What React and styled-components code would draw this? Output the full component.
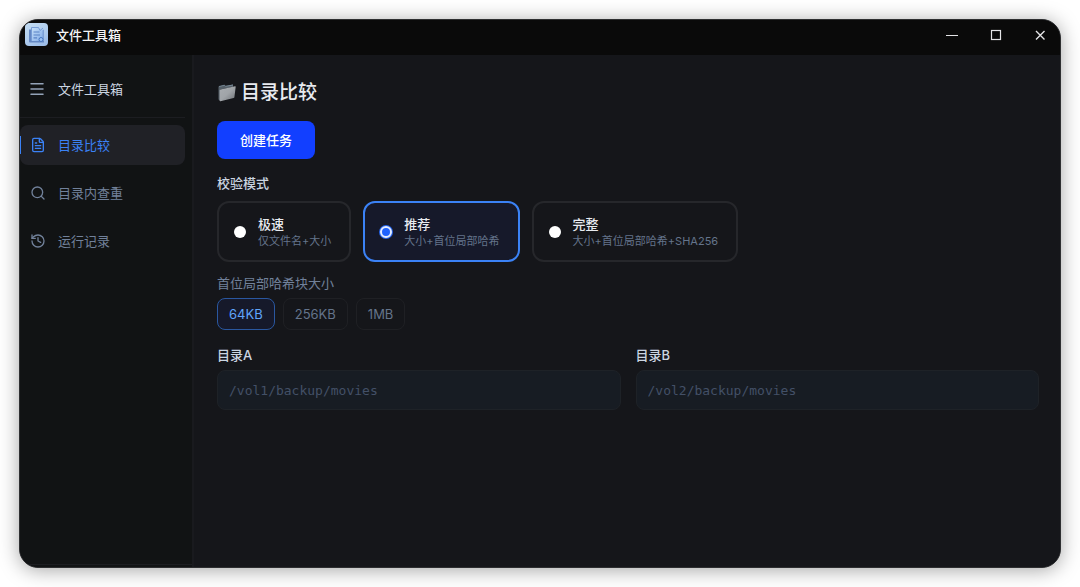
import React, { useState } from "react"
import styled, { createGlobalStyle, css } from "styled-components"
import { FileText, History, Menu, Search } from "lucide-react"

const NAV = [
    { id: "compare", label: "目录比较", icon: FileText },
    { id: "dupes", label: "目录内查重", icon: Search },
    { id: "history", label: "运行记录", icon: History },
]

const MODES = [
    { id: "fast", title: "极速", desc: "仅文件名+大小" },
    { id: "recommended", title: "推荐", desc: "大小+首位局部哈希" },
    { id: "full", title: "完整", desc: "大小+首位局部哈希+SHA256" },
]

const BLOCK_SIZES = ["64KB", "256KB", "1MB"]

export default function App() {
    const [page, setPage] = useState("compare")
    const [mode, setMode] = useState("recommended")
    const [blockSize, setBlockSize] = useState("64KB")

    return (
        <>
            <GlobalStyle />
            <Desktop>
                <Window>
                    <TitleBar>
                        <AppIcon />
                        <WindowTitle>文件工具箱</WindowTitle>
                        <WindowButtons />
                    </TitleBar>
                    <Body>
                        <Sidebar>
                            <SidebarHeader>
                                <MenuButton aria-label="菜单">
                                    <Menu size={18} strokeWidth={2} />
                                </MenuButton>
                                文件工具箱
                            </SidebarHeader>
                            <Nav>
                                {NAV.map(({ id, label, icon: Icon }) => (
                                    <NavItem key={id} type="button" $active={page === id} onClick={() => setPage(id)}>
                                        <Icon size={16} strokeWidth={2} />
                                        {label}
                                    </NavItem>
                                ))}
                            </Nav>
                            <SidebarFooter />
                        </Sidebar>
                        <Main>
                            <Heading>
                                <FolderIcon />
                                目录比较
                            </Heading>
                            <PrimaryButton type="button">创建任务</PrimaryButton>

                            <Group>
                                <Legend>校验模式</Legend>
                                <ModeRow>
                                    {MODES.map(m => (
                                        <ModeCard key={m.id} $checked={mode === m.id}>
                                            <Radio
                                                type="radio"
                                                name="mode"
                                                checked={mode === m.id}
                                                onChange={() => setMode(m.id)}
                                            />
                                            <ModeText>
                                                <ModeTitle>{m.title}</ModeTitle>
                                                <ModeDesc>{m.desc}</ModeDesc>
                                            </ModeText>
                                        </ModeCard>
                                    ))}
                                </ModeRow>
                            </Group>

                            <BlockLabel>首位局部哈希块大小</BlockLabel>
                            <ChipRow>
                                {BLOCK_SIZES.map(size => (
                                    <Chip
                                        key={size}
                                        type="button"
                                        $active={blockSize === size}
                                        onClick={() => setBlockSize(size)}
                                    >
                                        {size}
                                    </Chip>
                                ))}
                            </ChipRow>

                            <Fields>
                                <Field>
                                    <FieldLabel htmlFor="dir-a">目录A</FieldLabel>
                                    <PathInput id="dir-a" placeholder="/vol1/backup/movies" />
                                </Field>
                                <Field>
                                    <FieldLabel htmlFor="dir-b">目录B</FieldLabel>
                                    <PathInput id="dir-b" placeholder="/vol2/backup/movies" />
                                </Field>
                            </Fields>
                        </Main>
                    </Body>
                </Window>
            </Desktop>
        </>
    )
}

function WindowButtons() {
    return (
        <Controls>
            <ControlButton aria-label="最小化">
                <svg width="14" height="14" viewBox="0 0 14 14" fill="none" stroke="currentColor">
                    <path d="M1 7.5h12" strokeWidth="1.2" />
                </svg>
            </ControlButton>
            <ControlButton aria-label="最大化">
                <svg width="14" height="14" viewBox="0 0 14 14" fill="none" stroke="currentColor">
                    <rect x="2.5" y="2.5" width="9" height="9" strokeWidth="1.2" />
                </svg>
            </ControlButton>
            <ControlButton aria-label="关闭">
                <svg width="14" height="14" viewBox="0 0 14 14" fill="none" stroke="currentColor">
                    <path d="M3 3l8.500 8.500M11.500 3L3 11.500" strokeWidth="1.4" />
                </svg>
            </ControlButton>
        </Controls>
    )
}

function AppIcon() {
    return (
        <svg width="23" height="23" viewBox="0 0 23 23" fill="none">
            <defs>
                <linearGradient id="tile" x1="0" y1="0" x2="0.6" y2="1">
                    <stop offset="0" stopColor="#c3dcf2" />
                    <stop offset="0.6" stopColor="#b0cdee" />
                    <stop offset="1" stopColor="#9dbde8" />
                </linearGradient>
                <linearGradient id="sheet" x1="0" y1="0" x2="1" y2="1">
                    <stop offset="0" stopColor="#c6e0f8" />
                    <stop offset="1" stopColor="#82ace8" />
                </linearGradient>
            </defs>
            <rect width="23" height="23" rx="4" fill="url(#tile)" />
            <path d="M4 6.500h2V18h13v1.500H5q-1 0-1-1z" fill="#6488c4" />
            <path d="M16 8l3-1.500V18h-3z" fill="#7b9fd6" />
            <path d="M6.500 4.500h7L15 7l2.500-1v12h-11z" fill="url(#sheet)" />
            <path d="M6.500 18V4.500h7l1.500 3 3-2.500" stroke="#6f96d2" strokeWidth="0.9" />
            <path d="M8.500 9h6M8.500 12h6.500M8.500 14.800h3.500" stroke="#5b84c6" strokeWidth="1.2" />
            <circle cx="16" cy="16.500" r="2" fill="#9cc3f4" stroke="#4675be" />
        </svg>
    )
}

function FolderIcon() {
    return (
        <svg width="20" height="20" viewBox="0 0 20 20" fill="none">
            <defs>
                <linearGradient id="folder" x1="0" y1="0" x2="1" y2="1">
                    <stop offset="0" stopColor="#a9adb1" />
                    <stop offset="0.5" stopColor="#a0a4a8" />
                    <stop offset="1" stopColor="#6d7176" />
                </linearGradient>
            </defs>
            <path d="M1.500 3.500l6-1.500 1 1 7.500-1.500V4L3 6.500v11l-1.500-1z" fill="#555f68" />
            <path d="M2 3.500l5.500-1.300 1 1.100L16 2" stroke="#7f929f" strokeWidth="0.8" />
            <path d="M3.500 6.400L18 3.200q.8-.1.700.6l-1.300 10.400q-.1.700-.8.900L3.500 18.200q-.9.200-.9-.7V7.300q0-.8.900-.9z" fill="url(#folder)" />
        </svg>
    )
}

const GlobalStyle = createGlobalStyle`
  * {
    box-sizing: border-box;
  }
  body {
    margin: 0;
    background: #ffffff;
    font-family: Inter, "Noto Sans CJK SC", sans-serif;
    font-size: 13px;
    line-height: 20px;
  }
  button, input {
    font: inherit;
    margin: 0;
  }
`
const Desktop = styled.div`
  display: flex;
  min-height: 100vh;
  padding: 19px;
`
const Window = styled.div`
  display: flex;
  flex-direction: column;
  flex: 1;
  min-width: 0;
  overflow: hidden;
  border: 1px solid #2e2f31;
  border-radius: 19px;
  background: #15161a;
  box-shadow: 0 2px 20px rgba(0, 0, 0, 0.36);
`
const TitleBar = styled.header`
  display: flex;
  align-items: center;
  gap: 8px;
  height: 35px;
  padding: 0 0 6px 5px;
  background: #0a0a0a;
  color: #f4f4f5;
`
const WindowTitle = styled.span`
  font-weight: 500;
`
const Controls = styled.div`
  display: flex;
  gap: 4px;
  margin-left: auto;
`
const ControlButton = styled.button`
  display: flex;
  align-items: center;
  justify-content: center;
  width: 40px;
  height: 28px;
  padding: 0;
  border: 0;
  background: none;
  color: #e4e4e6;
`
const Body = styled.div`
  display: flex;
  flex: 1;
`
const Sidebar = styled.aside`
  display: flex;
  flex-direction: column;
  width: 174px;
  border-right: 2px solid #191a1e;
  background: #111314;
`
const SidebarHeader = styled.div`
  display: flex;
  align-items: center;
  gap: 12px;
  height: 63px;
  margin-right: 7px;
  padding: 6px 0 0 8px;
  border-bottom: 1px solid #1c1d21;
  color: #cbd5e1;
`
const MenuButton = styled.button`
  display: flex;
  padding: 0;
  border: 0;
  background: none;
  color: #94a3b8;
`
const Nav = styled.nav`
  display: flex;
  flex-direction: column;
  gap: 8px;
  padding: 7px 7px 0 0;
`
const NavItem = styled.button`
  position: relative;
  display: flex;
  align-items: center;
  gap: 12px;
  height: 40px;
  padding: 0 10px;
  border: 0;
  border-radius: 8px;
  background: ${props => (props.$active ? "#202126" : "transparent")};
  color: ${props => (props.$active ? "#3b82f6" : "#71819a")};
  cursor: pointer;

  ${props => props.$active && css`
    &::before {
      content: "";
      position: absolute;
      left: 0;
      top: 11px;
      width: 1px;
      height: 18px;
      background: #3b82f6;
    }
  `}
`
const SidebarFooter = styled.div`
  height: 3px;
  margin-top: auto;
  border-top: 1px solid #1c1d21;
`
const Main = styled.main`
  flex: 1;
  min-width: 0;
  padding: 24px 21px 24px 23px;
  background: #15161a;
`
const Heading = styled.h1`
  display: flex;
  align-items: center;
  gap: 4px;
  margin: 0 0 14px;
  color: #e8ebf0;
  font-size: 19px;
  font-weight: 500;
  line-height: 28px;
`
const PrimaryButton = styled.button`
  display: block;
  height: 38px;
  padding: 0 23px;
  border: 0;
  border-radius: 8px;
  background: #123fff;
  color: #ffffff;
  font-weight: 500;
  cursor: pointer;
`
const Group = styled.fieldset`
  min-width: 0;
  margin: 14px 0 0;
  padding: 0;
  border: 0;
`
const Legend = styled.legend`
  margin-bottom: 8px;
  padding: 0;
  color: #cbd5e1;
  font-weight: 500;
`
const ModeRow = styled.div`
  display: flex;
  flex-wrap: wrap;
  gap: 12px;
`
const ModeCard = styled.label`
  display: flex;
  align-items: center;
  gap: 12px;
  height: 61px;
  padding: 0 18px 0 15px;
  border: 2px solid ${props => (props.$checked ? "#3b82f6" : "#26272b")};
  border-radius: 12px;
  background: ${props => (props.$checked ? "#16192a" : "transparent")};
  cursor: pointer;
`
const Radio = styled.input`
  appearance: none;
  width: 12px;
  height: 12px;
  margin: 0;
  border-radius: 50%;
  background: #ffffff;

  &:checked {
    border: 2px solid #e3ebff;
    background: #1f62ff;
    box-shadow: 0 0 0 1px #2563eb;
  }
`
const ModeText = styled.span`
  display: flex;
  flex-direction: column;
`
const ModeTitle = styled.span`
  color: #e8ebf0;
  font-weight: 500;
  line-height: 18px;
`
const ModeDesc = styled.span`
  color: #64748b;
  font-size: 11px;
  line-height: 16px;
`
const BlockLabel = styled.div`
  margin: 11px 0 5px;
  color: #71819a;
`
const ChipRow = styled.div`
  display: flex;
  gap: 8px;
`
const Chip = styled.button`
  height: 32px;
  padding: 0 11px;
  border: 1px solid ${props => (props.$active ? "#2a579f" : "#1f2024")};
  border-radius: 8px;
  background: ${props => (props.$active ? "#16192a" : "transparent")};
  color: ${props => (props.$active ? "#60a5fa" : "#64748b")};
  cursor: pointer;
`
const Fields = styled.div`
  display: grid;
  grid-template-columns: 1fr 1fr;
  gap: 15px;
  margin-top: 15px;
`
const Field = styled.div`
  display: flex;
  flex-direction: column;
  gap: 5px;
  min-width: 0;
`
const FieldLabel = styled.label`
  color: #cbd5e1;
  font-weight: 500;
`
const PathInput = styled.input`
  width: 100%;
  height: 40px;
  padding: 0 11px;
  border: 1px solid #1e2227;
  border-radius: 8px;
  background: #171c23;
  color: #cbd5e1;
  font-family: "DejaVu Sans Mono", monospace;
  outline: none;

  &::placeholder {
    color: #435067;
    opacity: 1;
  }
`
